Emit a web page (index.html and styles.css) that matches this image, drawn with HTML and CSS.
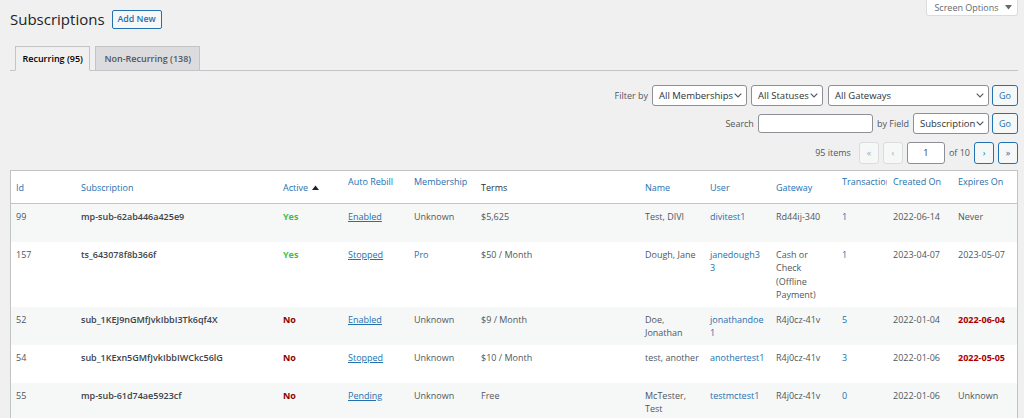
FILE: index.html
```html
<!DOCTYPE html>
<html lang="en">
<head>
<meta charset="utf-8">
<title>Subscriptions</title>
<link rel="stylesheet" href="styles.css">
</head>
<body>
<div class="wrap">
  <div class="topbar">
    <div class="heading">
      <h1>Subscriptions</h1>
      <a class="add-new" href="#">Add New</a>
    </div>
    <button class="screen-options">Screen Options <svg class="caret" width="7" height="5" viewBox="0 0 7 5"><path d="M0 0h7L3.5 4.5z" fill="#646970"/></svg></button>
  </div>

  <nav class="tabs">
    <a class="tab active" href="#">Recurring (95)</a>
    <a class="tab other" href="#">Non-Recurring (138)</a>
  </nav>

  <div class="controls">
    <div class="ctrl-row">
      <span class="label">Filter by</span>
      <div class="select w-memb"><span>All Memberships</span><svg width="8" height="5" viewBox="0 0 8 5"><path d="M0.7 0.7L4 4 7.3 0.7" fill="none" stroke="#50575e" stroke-width="1.1"/></svg></div>
      <div class="select w-stat"><span>All Statuses</span><svg width="8" height="5" viewBox="0 0 8 5"><path d="M0.7 0.7L4 4 7.3 0.7" fill="none" stroke="#50575e" stroke-width="1.1"/></svg></div>
      <div class="select w-gate"><span>All Gateways</span><svg width="8" height="5" viewBox="0 0 8 5"><path d="M0.7 0.7L4 4 7.3 0.7" fill="none" stroke="#50575e" stroke-width="1.1"/></svg></div>
      <button class="go">Go</button>
    </div>
    <div class="ctrl-row">
      <span class="label">Search</span>
      <div class="text-input w-search"></div>
      <span class="label">by Field</span>
      <div class="select w-field"><span>Subscription</span><svg width="8" height="5" viewBox="0 0 8 5"><path d="M0.7 0.7L4 4 7.3 0.7" fill="none" stroke="#50575e" stroke-width="1.1"/></svg></div>
      <button class="go">Go</button>
    </div>
    <div class="ctrl-row pager">
      <span class="label items">95 items</span>
      <span class="pbtn disabled">«</span>
      <span class="pbtn disabled">‹</span>
      <div class="text-input page-input">1</div>
      <span class="label">of 10</span>
      <span class="pbtn">›</span>
      <span class="pbtn">»</span>
    </div>
  </div>

  <table class="subs">
    <colgroup>
      <col style="width:64px"><col style="width:202px"><col style="width:65px"><col style="width:66px">
      <col style="width:67px"><col style="width:164px"><col style="width:65px"><col style="width:66px">
      <col style="width:66px"><col style="width:51px"><col style="width:65px"><col style="width:65px">
    </colgroup>
    <thead>
      <tr>
        <th class="lo first"><a href="#">Id</a></th>
        <th class="lo"><a href="#">Subscription</a></th>
        <th class="lo"><a href="#">Active</a> <svg class="sort" width="7" height="5" viewBox="0 0 7 5"><path d="M0 5h7L3.5 0.5z" fill="#1d2327"/></svg></th>
        <th class="hi"><a href="#">Auto Rebill</a></th>
        <th class="hi"><a href="#">Membership</a></th>
        <th class="lo plain">Terms</th>
        <th class="lo"><a href="#">Name</a></th>
        <th class="lo"><a href="#">User</a></th>
        <th class="lo"><a href="#">Gateway</a></th>
        <th class="hi"><a href="#">Transactions</a></th>
        <th class="hi"><a href="#">Created On</a></th>
        <th class="hi"><a href="#">Expires On</a></th>
      </tr>
    </thead>
    <tbody>
      <tr class="alt">
        <td class="first">99</td>
        <td><span class="sub-id">mp-sub-62ab446a425e9</span><div class="row-actions">Edit | Delete</div></td>
        <td><span class="yes">Yes</span></td>
        <td><a class="ul" href="#">Enabled</a></td>
        <td>Unknown</td>
        <td>$5,625</td>
        <td>Test, DIVI</td>
        <td class="user"><a href="#">divitest1</a></td>
        <td>Rd44ij-340</td>
        <td><a href="#">1</a></td>
        <td>2022-06-14</td>
        <td>Never</td>
      </tr>
      <tr>
        <td class="first">157</td>
        <td><span class="sub-id">ts_643078f8b366f</span><div class="row-actions">Edit | Delete</div></td>
        <td><span class="yes">Yes</span></td>
        <td><a class="ul" href="#">Stopped</a></td>
        <td><a href="#">Pro</a></td>
        <td>$50 / Month</td>
        <td>Dough, Jane</td>
        <td class="user"><a href="#">janedough3<br>3</a></td>
        <td>Cash or Check (Offline Payment)</td>
        <td><a href="#">1</a></td>
        <td>2023-04-07</td>
        <td>2023-05-07</td>
      </tr>
      <tr class="alt">
        <td class="first">52</td>
        <td><span class="sub-id">sub_1KEJ9nGMfJvkIbbI3Tk6qf4X</span><div class="row-actions">Edit | Delete</div></td>
        <td><span class="no">No</span></td>
        <td><a class="ul" href="#">Enabled</a></td>
        <td>Unknown</td>
        <td>$9 / Month</td>
        <td>Doe, Jonathan</td>
        <td class="user"><a href="#">jonathandoe1</a></td>
        <td>R4j0cz-41v</td>
        <td><a href="#">5</a></td>
        <td>2022-01-04</td>
        <td><span class="expired">2022-06-04</span></td>
      </tr>
      <tr>
        <td class="first">54</td>
        <td><span class="sub-id">sub_1KExn5GMfJvkIbbIWCkc56lG</span><div class="row-actions">Edit | Delete</div></td>
        <td><span class="no">No</span></td>
        <td><a class="ul" href="#">Stopped</a></td>
        <td>Unknown</td>
        <td>$10 / Month</td>
        <td>test, another</td>
        <td class="user"><a href="#">anothertest1</a></td>
        <td>R4j0cz-41v</td>
        <td><a href="#">3</a></td>
        <td>2022-01-06</td>
        <td><span class="expired">2022-05-05</span></td>
      </tr>
      <tr class="alt">
        <td class="first">55</td>
        <td><span class="sub-id">mp-sub-61d74ae5923cf</span><div class="row-actions">Edit | Delete</div></td>
        <td><span class="no">No</span></td>
        <td><a class="ul" href="#">Pending</a></td>
        <td>Unknown</td>
        <td>Free</td>
        <td>McTester, Test</td>
        <td class="user"><a href="#">testmctest1</a></td>
        <td>R4j0cz-41v</td>
        <td><a href="#">0</a></td>
        <td>2022-01-06</td>
        <td>Unknown</td>
      </tr>
    </tbody>
  </table>
</div>
</body>
</html>
```

FILE: styles.css
```css
html, body {
  margin: 0;
  background: #f0f0f1;
  overflow: hidden;
}
body {
  font-family: "Open Sans", "Noto Sans", sans-serif;
  font-size: 9px;
  line-height: 13.5px;
  color: #3c434a;
}
a { color: #2271b1; text-decoration: none; }

.wrap { padding: 0 6px 0 10px; }

.topbar {
  display: flex;
  justify-content: space-between;
  align-items: flex-start;
}
.heading {
  display: flex;
  align-items: center;
  gap: 7px;
  padding-top: 9px;
}
h1 {
  margin: 0;
  font-size: 15px;
  font-weight: 400;
  line-height: 21px;
  color: #1d2327;
}
.add-new {
  display: inline-block;
  box-sizing: border-box;
  height: 19px;
  border: 1px solid #2271b1;
  border-radius: 2px;
  background: #f6f7f7;
  color: #2271b1;
  font-weight: 600;
  font-size: 8.8px;
  line-height: 17px;
  padding: 0 5px;
}
.screen-options {
  box-sizing: border-box;
  width: 92px;
  height: 16px;
  background: #fff;
  border: 1px solid #dcdcde;
  border-top: none;
  border-radius: 0 0 3px 3px;
  font-family: inherit;
  font-size: 9px;
  line-height: 14px;
  color: #646970;
  padding: 0 0 0 2px;
  display: flex;
  align-items: center;
  justify-content: center;
  gap: 6px;
}

.tabs {
  margin-top: 16px;
  display: flex;
  gap: 5px;
  padding-left: 5px;
  border-bottom: 1px solid #c3c4c7;
}
.tab {
  box-sizing: border-box;
  height: 25px;
  margin-bottom: -1px;
  border: 1px solid #c3c4c7;
  background: #dcdcde;
  color: #50575e;
  font-weight: 600;
  font-size: 9px;
  line-height: 23px;
  padding: 0 6.5px;
}
.tab.other { padding: 0 8px; }
.tab.active {
  background: #f0f0f1;
  border-bottom-color: #f0f0f1;
  color: #000;
}

.controls {
  margin-top: 14px;
  display: flex;
  flex-direction: column;
  align-items: flex-end;
  gap: 7px;
}
.ctrl-row {
  display: flex;
  align-items: center;
  gap: 4px;
  height: 21px;
}
.ctrl-row.pager { height: 22px; margin-top: 1px; }
.label { color: #50575e; font-size: 9px; }
.items { margin-right: 4px; }
.select {
  box-sizing: border-box;
  height: 21px;
  display: flex;
  align-items: center;
  justify-content: space-between;
  border: 1px solid #8c8f94;
  border-radius: 3px;
  background: #fff;
  padding: 0 4px 0 6px;
  color: #2c3338;
  font-size: 9.5px;
}
.w-memb { width: 95px; }
.w-stat { width: 72px; }
.w-gate { width: 161px; margin-left: 1px; }
.w-field { width: 76px; }
.go {
  box-sizing: border-box;
  width: 26px;
  height: 21px;
  margin-left: -1px;
  border: 1px solid #2271b1;
  border-radius: 3px;
  background: #f6f7f7;
  color: #2271b1;
  font-family: inherit;
  font-size: 9px;
  padding: 0;
}
.text-input {
  box-sizing: border-box;
  height: 19px;
  border: 1px solid #8c8f94;
  border-radius: 3px;
  background: #fff;
}
.w-search { width: 115px; }
.page-input {
  width: 38px;
  height: 22px;
  text-align: center;
  line-height: 20px;
  color: #2c3338;
}
.pbtn {
  box-sizing: border-box;
  width: 20px;
  height: 22px;
  display: flex;
  align-items: center;
  justify-content: center;
  border: 1px solid #2271b1;
  border-radius: 3px;
  background: #f6f7f7;
  color: #2271b1;
  font-size: 9px;
}
.pbtn.disabled {
  border-color: #dcdcde;
  color: #a7aaad;
}

.subs {
  margin-top: 6px;
  width: 1008px;
  table-layout: fixed;
  border-collapse: separate;
  border-spacing: 0;
  background: #fff;
  border: 1px solid #c3c4c7;
  box-shadow: 0 1px 1px rgba(0,0,0,.04);
}
.subs th {
  text-align: left;
  font-weight: 400;
  vertical-align: top;
  border-bottom: 1px solid #c3c4c7;
  overflow: hidden;
  white-space: nowrap;
  color: #2c3338;
}
.subs th.lo { padding: 9.5px 6px 9px 6px; }
.subs th.hi { padding: 4px 6px 14.5px 6px; }
.subs th.first, .subs td.first { padding-left: 5px; }
.sort { margin-left: 2px; vertical-align: 1px; }

.subs td {
  vertical-align: top;
  padding: 5.5px 4px 5.5px 6px;
  color: #50575e;
  overflow-wrap: anywhere;
}
.subs tr.alt td { background: #f6f7f7; }
.sub-id { font-weight: 600; color: #3c434a; }
.row-actions { visibility: hidden; }
.yes { color: #3fc13f; font-weight: 700; }
.no { color: #8a0000; font-weight: 700; }
.expired { color: #a00; font-weight: 700; }
a.ul { text-decoration: underline; }
```
